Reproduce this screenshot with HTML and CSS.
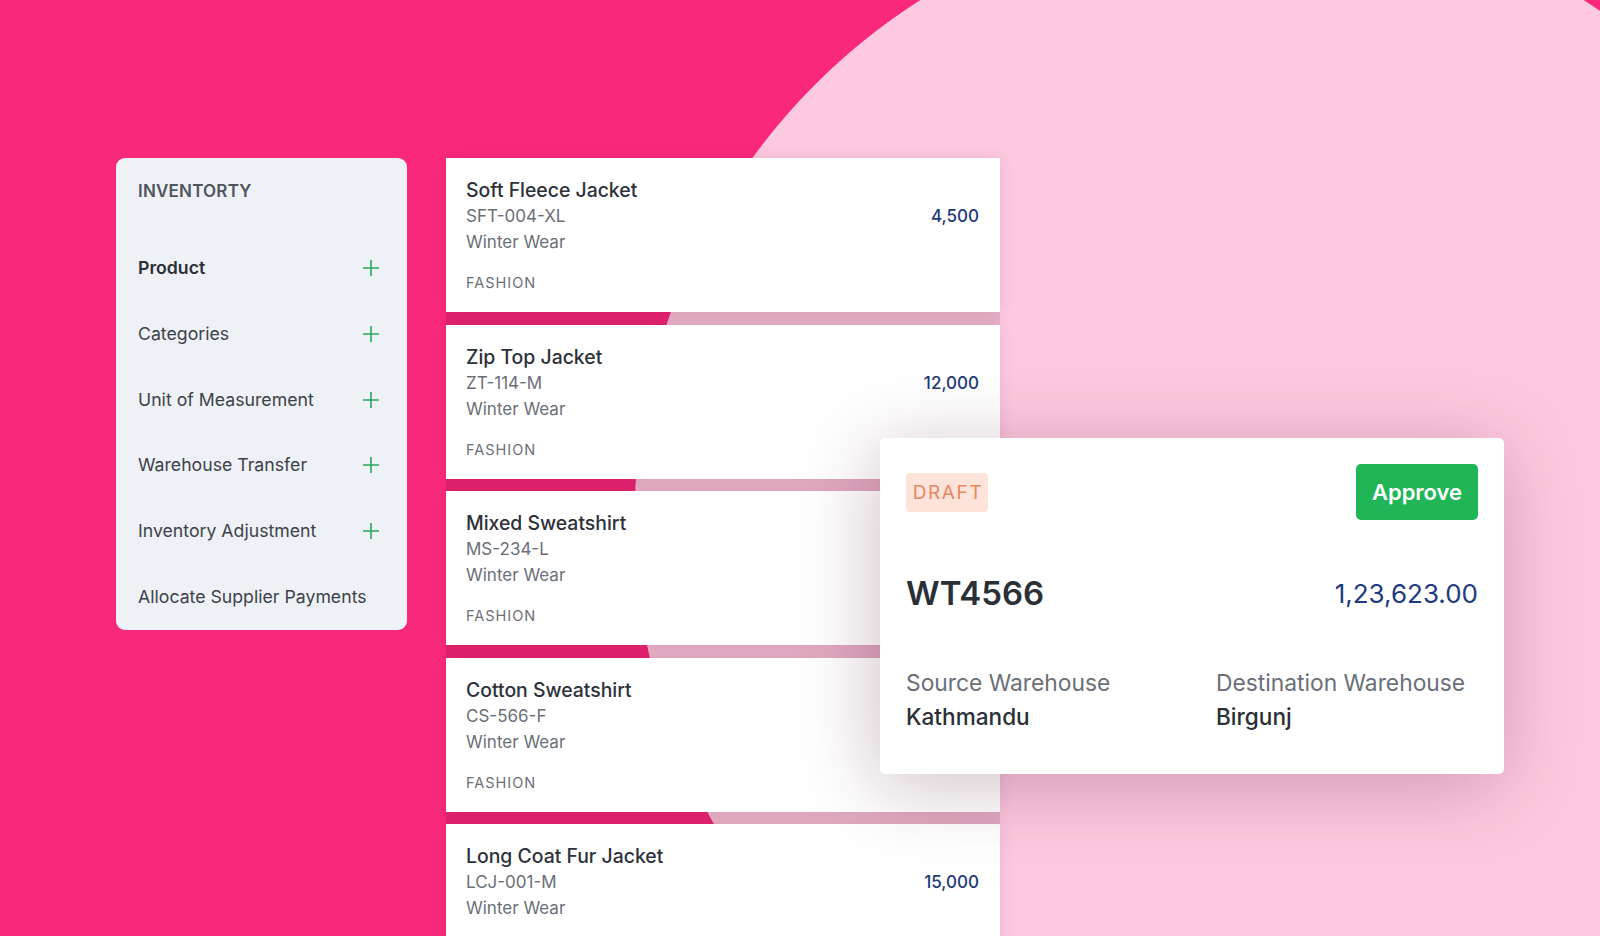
FILE: index.html
```html
<!DOCTYPE html>
<html lang="en">
<head>
<meta charset="utf-8">
<title>Inventory</title>
<link rel="stylesheet" href="styles.css">
</head>
<body>
<div class="stage">
  <aside class="sidebar">
    <div class="side-title">INVENTORTY</div>
    <ul class="side-list">
      <li class="side-item active"><span>Product</span><svg class="plus" viewBox="0 0 18 18"><path d="M9 1v16M1 9h16"/></svg></li>
      <li class="side-item"><span>Categories</span><svg class="plus" viewBox="0 0 18 18"><path d="M9 1v16M1 9h16"/></svg></li>
      <li class="side-item"><span>Unit of Measurement</span><svg class="plus" viewBox="0 0 18 18"><path d="M9 1v16M1 9h16"/></svg></li>
      <li class="side-item"><span>Warehouse Transfer</span><svg class="plus" viewBox="0 0 18 18"><path d="M9 1v16M1 9h16"/></svg></li>
      <li class="side-item"><span>Inventory Adjustment</span><svg class="plus" viewBox="0 0 18 18"><path d="M9 1v16M1 9h16"/></svg></li>
      <li class="side-item"><span>Allocate Supplier Payments</span></li>
    </ul>
  </aside>

  <section class="products">
    <article class="pcard">
      <div class="pname">Soft Fleece Jacket</div>
      <div class="psku">SFT-004-XL</div>
      <div class="pprice">4,500</div>
      <div class="pcat">Winter Wear</div>
      <div class="ptag">FASHION</div>
    </article>
    <article class="pcard">
      <div class="pname">Zip Top Jacket</div>
      <div class="psku">ZT-114-M</div>
      <div class="pprice">12,000</div>
      <div class="pcat">Winter Wear</div>
      <div class="ptag">FASHION</div>
    </article>
    <article class="pcard">
      <div class="pname">Mixed Sweatshirt</div>
      <div class="psku">MS-234-L</div>
      <div class="pcat">Winter Wear</div>
      <div class="ptag">FASHION</div>
    </article>
    <article class="pcard">
      <div class="pname">Cotton Sweatshirt</div>
      <div class="psku">CS-566-F</div>
      <div class="pcat">Winter Wear</div>
      <div class="ptag">FASHION</div>
    </article>
    <article class="pcard">
      <div class="pname">Long Coat Fur Jacket</div>
      <div class="psku">LCJ-001-M</div>
      <div class="pprice">15,000</div>
      <div class="pcat">Winter Wear</div>
    </article>
  </section>

  <div class="transfer">
    <div class="t-head">
      <span class="badge">DRAFT</span>
      <button class="approve">Approve</button>
    </div>
    <div class="t-main">
      <span class="t-id">WT4566</span>
      <span class="t-amount">1,23,623.00</span>
    </div>
    <div class="t-info">
      <div class="t-col">
        <div class="t-label">Source Warehouse</div>
        <div class="t-value">Kathmandu</div>
      </div>
      <div class="t-col">
        <div class="t-label">Destination Warehouse</div>
        <div class="t-value">Birgunj</div>
      </div>
    </div>
  </div>
</div>
</body>
</html>
```

FILE: styles.css
```css
* { box-sizing: border-box; }

html, body {
  margin: 0;
  padding: 0;
  width: 1600px;
  height: 936px;
  overflow: hidden;
}

body {
  font-family: Inter, "Noto Sans", "Liberation Sans", sans-serif;
  color: #2d3139;
}

.stage {
  position: relative;
  width: 1600px;
  height: 936px;
  overflow: hidden;
  background: radial-gradient(circle 618px at 1252px 521px, #fdc9e0 99.85%, #f9287b 100%);
  display: flex;
  align-items: flex-start;
  padding: 158px 0 0 116px;
  gap: 39px;
}

/* Sidebar */
.sidebar {
  width: 291px;
  flex: none;
  background: #eef1f6;
  border-radius: 9px;
  padding: 20px 27px 20px 22px;
}

.side-title {
  font-size: 17px;
  font-weight: 600;
  line-height: 26px;
  color: #50555e;
  letter-spacing: 0.2px;
}

.side-list {
  list-style: none;
  margin: 51px 0 0;
  padding: 0;
  display: flex;
  flex-direction: column;
  gap: 39.8px;
}

.side-item {
  display: flex;
  align-items: center;
  justify-content: space-between;
  font-size: 17.7px;
  line-height: 26px;
  color: #3d424a;
}

.side-item.active {
  font-weight: 600;
  color: #2b2f36;
}

.plus {
  width: 18px;
  height: 18px;
  fill: none;
  stroke: #27a85c;
  stroke-width: 1.6;
}

/* Product list */
.products {
  width: 554px;
  flex: none;
  display: flex;
  flex-direction: column;
  gap: 12.5px;
  background: rgba(70, 0, 30, 0.12);
}

.pcard {
  height: 154px;
  flex: none;
  background: #ffffff;
  box-shadow: 0 0 14px rgba(90, 0, 40, 0.10);
  padding: 19px 21px 0 20px;
  display: grid;
  grid-template-columns: 1fr auto;
  grid-template-rows: 26px 26px 26px 41px;
  align-items: center;
}

.pname {
  grid-column: 1 / 3;
  font-size: 19.4px;
  font-weight: 500;
  color: #2d3139;
}

.psku {
  grid-column: 1;
  grid-row: 2;
  font-size: 17px;
  color: #6a6f78;
}

.pcat {
  grid-column: 1 / 3;
  grid-row: 3;
  font-size: 17px;
  color: #6a6f78;
}

.pprice {
  grid-column: 2;
  grid-row: 2;
  font-size: 17px;
  font-weight: 500;
  color: #1e3a78;
}

.ptag {
  grid-column: 1 / 3;
  grid-row: 4;
  align-self: end;
  font-size: 14.5px;
  letter-spacing: 1px;
  color: #6a6f78;
  line-height: 26px;
}

/* Floating transfer card */
.transfer {
  position: absolute;
  left: 880px;
  top: 438px;
  width: 624px;
  height: 336px;
  background: #ffffff;
  border-radius: 5px;
  box-shadow: -4px 12px 80px rgba(70, 10, 40, 0.26);
  padding: 26px 26px 0 26px;
}

.t-head {
  display: flex;
  justify-content: space-between;
  align-items: center;
  height: 56px;
}

.badge {
  display: inline-flex;
  align-items: center;
  justify-content: center;
  width: 82px;
  height: 39px;
  background: #fde3da;
  color: #e8875f;
  border-radius: 4px;
  font-size: 19px;
  letter-spacing: 1.6px;
  padding-left: 2px;
}

.approve {
  width: 122px;
  height: 56px;
  border: none;
  border-radius: 5px;
  background: #20b556;
  color: #ffffff;
  font-family: inherit;
  font-size: 22px;
  font-weight: 600;
  padding: 0;
}

.t-main {
  margin-top: 53px;
  display: flex;
  justify-content: space-between;
  align-items: center;
  height: 40px;
}

.t-id {
  font-size: 33px;
  font-weight: 600;
  color: #2b2f36;
}

.t-amount {
  font-size: 26px;
  color: #1e3a80;
}

.t-info {
  margin-top: 55px;
  display: grid;
  grid-template-columns: 310px 1fr;
}

.t-label {
  font-size: 22.8px;
  line-height: 30px;
  color: #6a6f78;
}

.t-value {
  margin-top: 3px;
  font-size: 22.6px;
  line-height: 32px;
  font-weight: 500;
  color: #2b2f36;
}
```
